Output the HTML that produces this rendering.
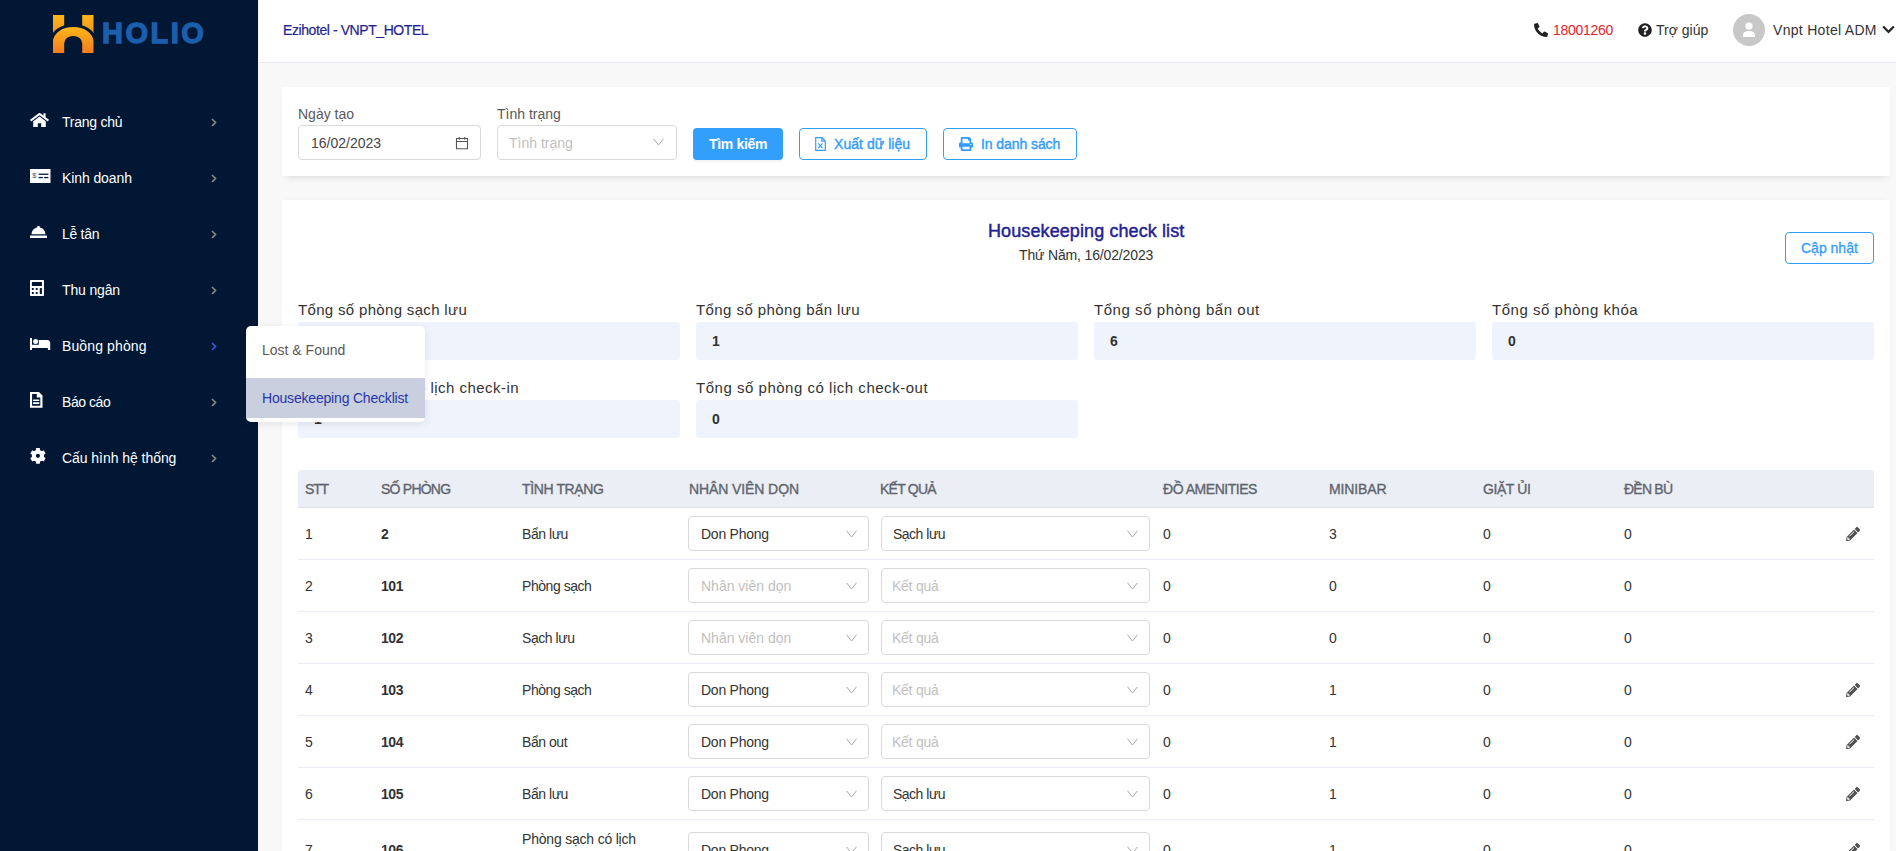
<!DOCTYPE html>
<html><head><meta charset="utf-8">
<style>
*{box-sizing:border-box;margin:0;padding:0}
html,body{width:1896px;height:851px;overflow:hidden;background:#f8f8f8;font-family:"Liberation Sans",sans-serif;color:#333}
.abs{position:absolute}
#side{position:absolute;left:0;top:0;width:258px;height:851px;background:#011734}
.mi{position:absolute;left:0;width:258px;height:40px;color:#fff;font-size:14px}
.mi .t{position:absolute;left:62px;top:12px;line-height:16px;white-space:nowrap}
.mi svg.ic{position:absolute}
.mi .chev{position:absolute;left:211px;top:16px}
#hdr{position:absolute;left:259px;top:0;width:1637px;height:63px;background:#fff;border-bottom:1px solid #e7eaf1}
.txt{position:absolute;white-space:nowrap;line-height:16px}
.card{position:absolute;background:#fff}
.lbl{position:absolute;font-size:14px;color:#595959;white-space:nowrap;line-height:16px}
.inp{position:absolute;border:1px solid #d9d9d9;border-radius:4px;background:#fff}
.btn{position:absolute;border-radius:4px;font-size:14px;white-space:nowrap}
.stl{position:absolute;font-size:15px;color:#333;white-space:nowrap;line-height:18px;letter-spacing:0.4px}
.stb{position:absolute;height:38px;background:#eff3fc;border-radius:3px;font-size:14px;font-weight:bold;color:#333}
.stb span{position:absolute;left:16px;top:11px;line-height:16px}
.th{position:absolute;top:481px;font-size:14px;color:#60646e;-webkit-text-stroke:0.35px #60646e;white-space:nowrap;line-height:16px;letter-spacing:-0.5px}
.row{position:absolute;left:298px;width:1576px;height:52px;border-bottom:1px solid #e9ecf2}
.c{position:absolute;font-size:14px;color:#333;white-space:nowrap;line-height:16px;letter-spacing:-0.45px}
.sel{position:absolute;height:35px;border:1px solid #d9d9d9;border-radius:4px;background:#fff}
.sel span{position:absolute;left:12px;top:9px;font-size:14px;line-height:16px;white-space:nowrap;letter-spacing:-0.25px}
.sel svg{position:absolute;right:11px;top:13px}
</style></head><body>

<!-- SIDEBAR -->
<div id="side">
  <!-- logo -->
  <svg class="abs" style="left:53px;top:15px" width="41" height="38" viewBox="0 0 41 38">
    <defs><linearGradient id="og" x1="0" y1="0" x2="0" y2="1"><stop offset="0" stop-color="#fdb618"/><stop offset="1" stop-color="#f47c20"/></linearGradient></defs>
    <rect x="0" y="0" width="11.2" height="30" fill="url(#og)"/><rect x="29.2" y="0" width="11.3" height="30" fill="url(#og)"/>
    <path fill="none" stroke="#011734" stroke-width="6" d="M0 38V26.5A20.25 14.5 0 0 1 40.5 26.5V38H29.2V28.3A9 7.4 0 0 0 11.2 28.3V38Z"/>
    <path fill="url(#og)" d="M0 38V26.5A20.25 14.5 0 0 1 40.5 26.5V38H29.2V28.3A9 7.4 0 0 0 11.2 28.3V38Z"/>
  </svg>
  <div class="abs" style="left:102px;top:17px;font-size:29px;font-weight:bold;color:#1a5eac;letter-spacing:2.5px;line-height:32px;-webkit-text-stroke:1.3px #1a5eac">HOLIO</div>

  <div class="mi" style="top:102px">
    <svg class="ic" style="left:30px;top:11px" width="19" height="15" viewBox="0 0 19 15"><path d="M0.6 7.6L9.5 0.9L18.4 7.6" stroke="#fff" stroke-width="2" fill="none"/><rect x="13.4" y="0.3" width="2.2" height="4" fill="#fff"/><path fill="#fff" d="M3.2 8.2L9.5 3.4L15.8 8.2V13.9H11.2V10.2H7.8V13.9H3.2Z"/></svg>
    <span class="t" style="letter-spacing:-0.25px">Trang chủ</span>
    <svg class="chev" width="6" height="9" viewBox="0 0 6 9"><path d="M1 1L4.5 4.5L1 8" stroke="#888" stroke-width="1.6" fill="none"/></svg>
  </div>
  <div class="mi" style="top:158px">
    <svg class="ic" style="left:30px;top:11px" width="21" height="14" viewBox="0 0 21 14"><rect width="20.5" height="14" fill="#fff"/><text x="2.3" y="9.4" font-size="7.5" font-family="Liberation Sans" fill="#4a5060">$</text><rect x="8.6" y="4.6" width="9.8" height="1.3" fill="#011734"/><rect x="8.6" y="7.9" width="4.2" height="1.3" fill="#011734"/><rect x="14.2" y="7.9" width="4.2" height="1.3" fill="#011734"/></svg>
    <span class="t" style="letter-spacing:-0.1px">Kinh doanh</span>
    <svg class="chev" width="6" height="9" viewBox="0 0 6 9"><path d="M1 1L4.5 4.5L1 8" stroke="#888" stroke-width="1.6" fill="none"/></svg>
  </div>
  <div class="mi" style="top:214px">
    <svg class="ic" style="left:30px;top:12px" width="17" height="12" viewBox="0 0 17 12"><path fill="#fff" d="M7.3 0H9.7V1.4C13 1.9 15.4 4.7 15.4 8.2H1.6C1.6 4.7 4 1.9 7.3 1.4Z M0 9.5H17V12H0Z"/></svg>
    <span class="t" style="letter-spacing:-0.3px">Lễ tân</span>
    <svg class="chev" width="6" height="9" viewBox="0 0 6 9"><path d="M1 1L4.5 4.5L1 8" stroke="#888" stroke-width="1.6" fill="none"/></svg>
  </div>
  <div class="mi" style="top:270px">
    <svg class="ic" style="left:30px;top:10px" width="14" height="16" viewBox="0 0 14 16"><path fill="#fff" fill-rule="evenodd" d="M1 0H13C13.6 0 14 .4 14 1V15C14 15.6 13.6 16 13 16H1C.4 16 0 15.6 0 15V1C0 .4 .4 0 1 0Z M1.9 2.1V6.1H11.9V2.1Z M1.9 7.9V9.9H3.7V7.9Z M5.8 7.9V9.9H7.6V7.9Z M9.8 7.9V13.9H11.9V7.9Z M1.9 11.9V13.9H3.7V11.9Z M5.8 11.9V13.9H7.6V11.9Z"/></svg>
    <span class="t" style="letter-spacing:-0.15px">Thu ngân</span>
    <svg class="chev" width="6" height="9" viewBox="0 0 6 9"><path d="M1 1L4.5 4.5L1 8" stroke="#888" stroke-width="1.6" fill="none"/></svg>
  </div>
  <div class="mi" style="top:326px">
    <svg class="ic" style="left:30px;top:12px" width="21" height="13" viewBox="0 0 21 13"><path fill="#fff" d="M0 0H2V6.8H8.8V1.9H17.2C18.9 1.9 20.2 3.2 20.2 4.9V12H17.9V9.9H2V12H0Z"/><circle cx="5.6" cy="3.5" r="2.5" fill="#fff"/></svg>
    <span class="t" style="letter-spacing:0.12px">Buồng phòng</span>
    <svg class="chev" width="6" height="9" viewBox="0 0 6 9"><path d="M1 1L4.5 4.5L1 8" stroke="#3b5bdb" stroke-width="1.6" fill="none"/></svg>
  </div>
  <div class="mi" style="top:382px">
    <svg class="ic" style="left:30px;top:10px" width="13" height="16" viewBox="0 0 13 16"><path fill="#fff" fill-rule="evenodd" d="M0 0H9L12.5 3.5V15.8H0Z M2.1 2.1V13.8H10.3V5.4H6.8V2.1Z M3.1 7.4H9.3V8.9H3.1Z M3.1 10.2H9.3V11.9H3.1Z"/></svg>
    <span class="t" style="letter-spacing:-0.45px">Báo cáo</span>
    <svg class="chev" width="6" height="9" viewBox="0 0 6 9"><path d="M1 1L4.5 4.5L1 8" stroke="#888" stroke-width="1.6" fill="none"/></svg>
  </div>
  <div class="mi" style="top:438px">
    <svg class="ic" style="left:30px;top:10px" width="16" height="16" viewBox="0 0 16 16"><g transform="translate(7.95 7.85)" fill="#fff"><circle r="6.1"/><rect x="-2" y="-7.8" width="4" height="15.6" rx="0.6"/><rect x="-2" y="-7.8" width="4" height="15.6" rx="0.6" transform="rotate(60)"/><rect x="-2" y="-7.8" width="4" height="15.6" rx="0.6" transform="rotate(-60)"/><circle r="2.1" fill="#011734"/></g></svg>
    <span class="t" style="letter-spacing:-0.05px">Cấu hình hệ thống</span>
    <svg class="chev" width="6" height="9" viewBox="0 0 6 9"><path d="M1 1L4.5 4.5L1 8" stroke="#888" stroke-width="1.6" fill="none"/></svg>
  </div>
</div>

<!-- HEADER -->
<div id="hdr"></div>
<div class="txt" style="left:283px;top:22px;font-size:14px;color:#1f2390;letter-spacing:-0.42px;-webkit-text-stroke:0.2px #1f2390">Ezihotel - VNPT_HOTEL</div>
<svg class="abs" style="left:1534px;top:23px" width="14" height="14" viewBox="0 0 512 512"><path fill="#222" d="M497.4 361.8l-112-48a24 24 0 0 0-28 6.9l-49.6 60.6A370.7 370.7 0 0 1 130.6 204.1l60.6-49.6a23.9 23.9 0 0 0 6.9-28l-48-112A24.2 24.2 0 0 0 122.6.6l-104 24A24 24 0 0 0 0 48c0 256.5 207.9 464 464 464a24 24 0 0 0 23.4-18.6l24-104a24.3 24.3 0 0 0-14-27.6z"/></svg>
<div class="txt" style="left:1553px;top:22px;font-size:14px;color:#e5242c;letter-spacing:-0.27px">18001260</div>
<svg class="abs" style="left:1638px;top:23px" width="14" height="14" viewBox="0 0 512 512"><path fill="#222" d="M504 256c0 137-111 248-248 248S8 393 8 256 119 8 256 8s248 111 248 248zM262.7 90c-54.5 0-89.3 23-116.5 63.8-3.5 5.3-2.4 12.4 2.7 16.3l34.7 26.3c5.2 3.9 12.6 3 16.7-2.1 17.9-22.7 30.1-35.8 57.3-35.8 20.4 0 45.700 13.100 45.7 33 0 15-12.400 22.7-32.500 34-23.500 13.200-54.600 29.600-54.600 70.600V300c0 6.6 5.400 12 12 12h56c6.6 0 12-5.4 12-12v-1.3c0-28.4 83-29.600 83-106.700 0-58.100-60.300-102-116.700-102zM256 338c-25.300 0-46 20.600-46 46 0 25.300 20.600 46 46 46s46-20.600 46-46c0-25.300-20.600-46-46-46z"/></svg>
<div class="txt" style="left:1656px;top:22px;font-size:14px;color:#333">Trợ giúp</div>
<div class="abs" style="left:1733px;top:14px;width:32px;height:32px;border-radius:50%;background:#c8c8c8;overflow:hidden">
  <svg class="abs" style="left:9px;top:8px" width="14" height="15" viewBox="0 0 14 15"><circle cx="7" cy="4.2" r="3.6" fill="#fff"/><path fill="#fff" d="M1 15V13C1 10.5 3 9 7 9S13 10.5 13 13V15Z"/></svg>
</div>
<div class="txt" style="left:1773px;top:22px;font-size:14px;color:#333;letter-spacing:0.3px">Vnpt Hotel ADM</div>
<svg class="abs" style="left:1882px;top:25px" width="13" height="9" viewBox="0 0 13 9"><path d="M1.2 1.5L6.5 7L11.8 1.5" stroke="#222" stroke-width="2.2" fill="none"/></svg>

<!-- FILTER CARD -->
<div class="card" style="left:282px;top:87px;width:1608px;height:89px;box-shadow:0 5px 7px -4px rgba(0,0,0,0.13)"></div>
<div class="lbl" style="left:298px;top:106px">Ngày tạo</div>
<div class="inp" style="left:298px;top:125px;width:183px;height:35px"></div>
<div class="txt" style="left:311px;top:135px;font-size:14px;color:#454545">16/02/2023</div>
<svg class="abs" style="left:455px;top:136px" width="14" height="14" viewBox="0 0 14 14"><path d="M1.5 2.5H12.5V12.8H1.5Z M1.5 5.5H12.5 M4.2 1V3.8 M9.8 1V3.8" stroke="#555" stroke-width="1.1" fill="none"/></svg>
<div class="lbl" style="left:497px;top:106px">Tình trạng</div>
<div class="inp" style="left:497px;top:125px;width:180px;height:35px"></div>
<div class="txt" style="left:509px;top:135px;font-size:14px;color:#bfbfbf">Tình trạng</div>
<svg class="abs" style="left:653px;top:138px" width="11" height="8" viewBox="0 0 11 8"><path d="M.5 .8L5.5 7L10.5 .8" stroke="#aaa" stroke-width="1" fill="none"/></svg>

<div class="btn" style="left:693px;top:128px;width:90px;height:32px;background:#339ffd;color:#fff;font-weight:bold;box-shadow:0 2px 0 rgba(0,0,0,0.045)"><span class="abs" style="left:16px;top:8px;line-height:16px;letter-spacing:-0.33px">Tìm kiếm</span></div>
<div class="btn" style="left:799px;top:128px;width:128px;height:32px;border:1px solid #339dfc;color:#339dfc;background:#fff">
  <svg class="abs" style="left:15px;top:8px" width="11" height="14" viewBox="0 0 11 14"><path d="M.7 .7H7L10.3 4V13.3H.7Z M6.8 .7V4.2H10.3" stroke="#339dfc" stroke-width="1.2" fill="none"/><path d="M3.2 6.3L7.5 11.2 M7.5 6.3L3.2 11.2" stroke="#339dfc" stroke-width="1.1"/></svg>
  <span class="abs" style="left:34px;top:7px;line-height:16px;-webkit-text-stroke:0.4px #339dfc;letter-spacing:0.05px">Xuất dữ liệu</span>
</div>
<div class="btn" style="left:943px;top:128px;width:134px;height:32px;border:1px solid #339dfc;color:#339dfc;background:#fff">
  <svg class="abs" style="left:15px;top:8px" width="14" height="14" viewBox="0 0 512 512"><path fill="#339dfc" d="M448 192V77.250c0-8.490-3.370-16.620-9.370-22.630L393.370 9.370c-6-6-14.140-9.370-22.630-9.370H96C78.330 0 64 14.330 64 32v160c-35.350 0-64 28.650-64 64v112c0 8.840 7.160 16 16 16h48v96c0 17.670 14.330 32 32 32h320c17.670 0 32-14.330 32-32v-96h48c8.840 0 16-7.160 16-16V256c0-35.350-28.650-64-64-64zm-64 256H128v-96h256v96zm0-224H128V64h192v48c0 8.840 7.160 16 16 16h48v96zm48 72c-13.250 0-24-10.750-24-24 0-13.260 10.750-24 24-24s24 10.740 24 24c0 13.250-10.750 24-24 24z"/></svg>
  <span class="abs" style="left:37px;top:7px;line-height:16px;-webkit-text-stroke:0.4px #339dfc;letter-spacing:-0.08px">In danh sách</span>
</div>

<!-- MAIN CARD -->
<div class="card" style="left:282px;top:200px;width:1608px;height:651px;box-shadow:0 -2px 6px -3px rgba(0,0,0,0.07)"></div>
<div class="txt" style="left:988px;top:221px;font-size:18px;line-height:20px;color:#1f2394;letter-spacing:0.1px;-webkit-text-stroke:0.45px #1f2394">Housekeeping check list</div>
<div class="txt" style="left:1019px;top:247px;font-size:14px;color:#333;letter-spacing:-0.15px">Thứ Năm, 16/02/2023</div>
<div class="btn" style="left:1785px;top:232px;width:89px;height:32px;border:1px solid #339dfc;color:#339dfc;background:#fff"><span class="abs" style="left:15px;top:7px;line-height:16px;-webkit-text-stroke:0.3px #339dfc">Cập nhật</span></div>

<div class="stl" style="left:298px;top:301px;letter-spacing:0.33px">Tổng số phòng sạch lưu</div>
<div class="stb" style="left:298px;top:322px;width:382px"><span>1</span></div>
<div class="stl" style="left:696px;top:301px;letter-spacing:0.42px">Tổng số phòng bẩn lưu</div>
<div class="stb" style="left:696px;top:322px;width:382px"><span>1</span></div>
<div class="stl" style="left:1094px;top:301px;letter-spacing:0.55px">Tổng số phòng bẩn out</div>
<div class="stb" style="left:1094px;top:322px;width:382px"><span>6</span></div>
<div class="stl" style="left:1492px;top:301px;letter-spacing:0.52px">Tổng số phòng khóa</div>
<div class="stb" style="left:1492px;top:322px;width:382px"><span>0</span></div>
<div class="stl" style="left:298px;top:379px;letter-spacing:0.48px">Tổng số phòng có lịch check-in</div>
<div class="stb" style="left:298px;top:400px;width:382px"><span>1</span></div>
<div class="stl" style="left:696px;top:379px;letter-spacing:0.52px">Tổng số phòng có lịch check-out</div>
<div class="stb" style="left:696px;top:400px;width:382px"><span>0</span></div>

<!-- TABLE -->
<div class="abs" style="left:298px;top:470px;width:1576px;height:38px;background:#ebeef5;border-radius:4px 4px 0 0;border-bottom:1px solid #e2e4e9"></div>
<div class="th" style="left:305px;letter-spacing:-1.2px">STT</div>
<div class="th" style="left:381px;letter-spacing:-0.77px">SỐ PHÒNG</div>
<div class="th" style="left:522px;letter-spacing:-0.38px">TÌNH TRẠNG</div>
<div class="th" style="left:689px;letter-spacing:-0.1px">NHÂN VIÊN DỌN</div>
<div class="th" style="left:880px;letter-spacing:-0.77px">KẾT QUẢ</div>
<div class="th" style="left:1163px;letter-spacing:-0.47px">ĐỒ AMENITIES</div>
<div class="th" style="left:1329px;letter-spacing:-0.12px">MINIBAR</div>
<div class="th" style="left:1483px;letter-spacing:-0.42px">GIẶT ỦI</div>
<div class="th" style="left:1624px;letter-spacing:-0.78px">ĐỀN BÙ</div>

<div id="rows">
<div class="row" style="top:508px;height:52px"></div>
<div class="c" style="left:305px;top:526px">1</div>
<div class="c" style="left:381px;top:526px;font-weight:bold">2</div>
<div class="c" style="left:522px;top:526px">Bẩn lưu</div>
<div class="sel" style="left:688px;top:516px;width:181px"><span style="color:#333">Don Phong</span><svg width="11" height="8" viewBox="0 0 11 8"><path d="M.5 .8L5.5 7L10.5 .8" stroke="#aaa" stroke-width="1" fill="none"/></svg></div>
<div class="sel" style="left:881px;top:516px;width:269px"><span style="color:#333;left:11px;letter-spacing:-0.5px">Sạch lưu</span><svg width="11" height="8" viewBox="0 0 11 8"><path d="M.5 .8L5.5 7L10.5 .8" stroke="#aaa" stroke-width="1" fill="none"/></svg></div>
<div class="c" style="left:1163px;top:526px">0</div>
<div class="c" style="left:1329px;top:526px">3</div>
<div class="c" style="left:1483px;top:526px">0</div>
<div class="c" style="left:1624px;top:526px">0</div>
<svg class="abs" style="left:1846px;top:527px" width="14" height="14" viewBox="0 0 512 512"><path fill="#505050" d="M497.9 142.1l-46.1 46.1c-4.7 4.7-12.3 4.7-17 0l-111-111c-4.7-4.7-4.7-12.3 0-17l46.1-46.1c18.7-18.7 49.1-18.7 67.9 0l60.1 60.1c18.8 18.7 18.8 49.1 0 67.9zM284.2 99.8L21.6 362.4.4 483.9c-2.9 16.4 11.4 30.6 27.8 27.8l121.5-21.3 262.6-262.6c4.7-4.7 4.7-12.3 0-17l-111-111c-4.8-4.7-12.4-4.7-17.1 0zM124.1 339.9c-5.5-5.5-5.5-14.3 0-19.8l154-154c5.5-5.5 14.3-5.5 19.8 0s5.5 14.3 0 19.8l-154 154c-5.5 5.5-14.3 5.5-19.8 0zM88 424h48v36.3l-64.5 11.3-31.1-31.1L51.7 376H88v48z"/></svg>
<div class="row" style="top:560px;height:52px"></div>
<div class="c" style="left:305px;top:578px">2</div>
<div class="c" style="left:381px;top:578px;font-weight:bold">101</div>
<div class="c" style="left:522px;top:578px">Phòng sạch</div>
<div class="sel" style="left:688px;top:568px;width:181px"><span style="color:#bfbfbf;letter-spacing:0px">Nhân viên dọn</span><svg width="11" height="8" viewBox="0 0 11 8"><path d="M.5 .8L5.5 7L10.5 .8" stroke="#aaa" stroke-width="1" fill="none"/></svg></div>
<div class="sel" style="left:881px;top:568px;width:269px"><span style="color:#bfbfbf;left:10px">Kết quả</span><svg width="11" height="8" viewBox="0 0 11 8"><path d="M.5 .8L5.5 7L10.5 .8" stroke="#aaa" stroke-width="1" fill="none"/></svg></div>
<div class="c" style="left:1163px;top:578px">0</div>
<div class="c" style="left:1329px;top:578px">0</div>
<div class="c" style="left:1483px;top:578px">0</div>
<div class="c" style="left:1624px;top:578px">0</div>
<div class="row" style="top:612px;height:52px"></div>
<div class="c" style="left:305px;top:630px">3</div>
<div class="c" style="left:381px;top:630px;font-weight:bold">102</div>
<div class="c" style="left:522px;top:630px">Sạch lưu</div>
<div class="sel" style="left:688px;top:620px;width:181px"><span style="color:#bfbfbf;letter-spacing:0px">Nhân viên dọn</span><svg width="11" height="8" viewBox="0 0 11 8"><path d="M.5 .8L5.5 7L10.5 .8" stroke="#aaa" stroke-width="1" fill="none"/></svg></div>
<div class="sel" style="left:881px;top:620px;width:269px"><span style="color:#bfbfbf;left:10px">Kết quả</span><svg width="11" height="8" viewBox="0 0 11 8"><path d="M.5 .8L5.5 7L10.5 .8" stroke="#aaa" stroke-width="1" fill="none"/></svg></div>
<div class="c" style="left:1163px;top:630px">0</div>
<div class="c" style="left:1329px;top:630px">0</div>
<div class="c" style="left:1483px;top:630px">0</div>
<div class="c" style="left:1624px;top:630px">0</div>
<div class="row" style="top:664px;height:52px"></div>
<div class="c" style="left:305px;top:682px">4</div>
<div class="c" style="left:381px;top:682px;font-weight:bold">103</div>
<div class="c" style="left:522px;top:682px">Phòng sạch</div>
<div class="sel" style="left:688px;top:672px;width:181px"><span style="color:#333">Don Phong</span><svg width="11" height="8" viewBox="0 0 11 8"><path d="M.5 .8L5.5 7L10.5 .8" stroke="#aaa" stroke-width="1" fill="none"/></svg></div>
<div class="sel" style="left:881px;top:672px;width:269px"><span style="color:#bfbfbf;left:10px">Kết quả</span><svg width="11" height="8" viewBox="0 0 11 8"><path d="M.5 .8L5.5 7L10.5 .8" stroke="#aaa" stroke-width="1" fill="none"/></svg></div>
<div class="c" style="left:1163px;top:682px">0</div>
<div class="c" style="left:1329px;top:682px">1</div>
<div class="c" style="left:1483px;top:682px">0</div>
<div class="c" style="left:1624px;top:682px">0</div>
<svg class="abs" style="left:1846px;top:683px" width="14" height="14" viewBox="0 0 512 512"><path fill="#505050" d="M497.9 142.1l-46.1 46.1c-4.7 4.7-12.3 4.7-17 0l-111-111c-4.7-4.7-4.7-12.3 0-17l46.1-46.1c18.7-18.7 49.1-18.7 67.9 0l60.1 60.1c18.8 18.7 18.8 49.1 0 67.9zM284.2 99.8L21.6 362.4.4 483.9c-2.9 16.4 11.4 30.6 27.8 27.8l121.5-21.3 262.6-262.6c4.7-4.7 4.7-12.3 0-17l-111-111c-4.8-4.7-12.4-4.7-17.1 0zM124.1 339.9c-5.5-5.5-5.5-14.3 0-19.8l154-154c5.5-5.5 14.3-5.5 19.8 0s5.5 14.3 0 19.8l-154 154c-5.5 5.5-14.3 5.5-19.8 0zM88 424h48v36.3l-64.5 11.3-31.1-31.1L51.7 376H88v48z"/></svg>
<div class="row" style="top:716px;height:52px"></div>
<div class="c" style="left:305px;top:734px">5</div>
<div class="c" style="left:381px;top:734px;font-weight:bold">104</div>
<div class="c" style="left:522px;top:734px">Bẩn out</div>
<div class="sel" style="left:688px;top:724px;width:181px"><span style="color:#333">Don Phong</span><svg width="11" height="8" viewBox="0 0 11 8"><path d="M.5 .8L5.5 7L10.5 .8" stroke="#aaa" stroke-width="1" fill="none"/></svg></div>
<div class="sel" style="left:881px;top:724px;width:269px"><span style="color:#bfbfbf;left:10px">Kết quả</span><svg width="11" height="8" viewBox="0 0 11 8"><path d="M.5 .8L5.5 7L10.5 .8" stroke="#aaa" stroke-width="1" fill="none"/></svg></div>
<div class="c" style="left:1163px;top:734px">0</div>
<div class="c" style="left:1329px;top:734px">1</div>
<div class="c" style="left:1483px;top:734px">0</div>
<div class="c" style="left:1624px;top:734px">0</div>
<svg class="abs" style="left:1846px;top:735px" width="14" height="14" viewBox="0 0 512 512"><path fill="#505050" d="M497.9 142.1l-46.1 46.1c-4.7 4.7-12.3 4.7-17 0l-111-111c-4.7-4.7-4.7-12.3 0-17l46.1-46.1c18.7-18.7 49.1-18.7 67.9 0l60.1 60.1c18.8 18.7 18.8 49.1 0 67.9zM284.2 99.8L21.6 362.4.4 483.9c-2.9 16.4 11.4 30.6 27.8 27.8l121.5-21.3 262.6-262.6c4.7-4.7 4.7-12.3 0-17l-111-111c-4.8-4.7-12.4-4.7-17.1 0zM124.1 339.9c-5.5-5.5-5.5-14.3 0-19.8l154-154c5.5-5.5 14.3-5.5 19.8 0s5.5 14.3 0 19.8l-154 154c-5.5 5.5-14.3 5.5-19.8 0zM88 424h48v36.3l-64.5 11.3-31.1-31.1L51.7 376H88v48z"/></svg>
<div class="row" style="top:768px;height:52px"></div>
<div class="c" style="left:305px;top:786px">6</div>
<div class="c" style="left:381px;top:786px;font-weight:bold">105</div>
<div class="c" style="left:522px;top:786px">Bẩn lưu</div>
<div class="sel" style="left:688px;top:776px;width:181px"><span style="color:#333">Don Phong</span><svg width="11" height="8" viewBox="0 0 11 8"><path d="M.5 .8L5.5 7L10.5 .8" stroke="#aaa" stroke-width="1" fill="none"/></svg></div>
<div class="sel" style="left:881px;top:776px;width:269px"><span style="color:#333;left:11px;letter-spacing:-0.5px">Sạch lưu</span><svg width="11" height="8" viewBox="0 0 11 8"><path d="M.5 .8L5.5 7L10.5 .8" stroke="#aaa" stroke-width="1" fill="none"/></svg></div>
<div class="c" style="left:1163px;top:786px">0</div>
<div class="c" style="left:1329px;top:786px">1</div>
<div class="c" style="left:1483px;top:786px">0</div>
<div class="c" style="left:1624px;top:786px">0</div>
<svg class="abs" style="left:1846px;top:787px" width="14" height="14" viewBox="0 0 512 512"><path fill="#505050" d="M497.9 142.1l-46.1 46.1c-4.7 4.7-12.3 4.7-17 0l-111-111c-4.7-4.7-4.7-12.3 0-17l46.1-46.1c18.7-18.7 49.1-18.7 67.9 0l60.1 60.1c18.8 18.7 18.8 49.1 0 67.9zM284.2 99.8L21.6 362.4.4 483.9c-2.9 16.4 11.4 30.6 27.8 27.8l121.5-21.3 262.6-262.6c4.7-4.7 4.7-12.3 0-17l-111-111c-4.8-4.7-12.4-4.7-17.1 0zM124.1 339.9c-5.5-5.5-5.5-14.3 0-19.8l154-154c5.5-5.5 14.3-5.5 19.8 0s5.5 14.3 0 19.8l-154 154c-5.5 5.5-14.3 5.5-19.8 0zM88 424h48v36.3l-64.5 11.3-31.1-31.1L51.7 376H88v48z"/></svg>
<div class="row" style="top:820px;height:60px"></div>
<div class="c" style="left:305px;top:842px">7</div>
<div class="c" style="left:381px;top:842px;font-weight:bold">106</div>
<div class="c" style="left:522px;top:829px;line-height:21px;letter-spacing:-0.2px">Phòng sạch có lịch<br>check-in</div>
<div class="sel" style="left:688px;top:832px;width:181px"><span style="color:#333">Don Phong</span><svg width="11" height="8" viewBox="0 0 11 8"><path d="M.5 .8L5.5 7L10.5 .8" stroke="#aaa" stroke-width="1" fill="none"/></svg></div>
<div class="sel" style="left:881px;top:832px;width:269px"><span style="color:#333;left:11px;letter-spacing:-0.5px">Sạch lưu</span><svg width="11" height="8" viewBox="0 0 11 8"><path d="M.5 .8L5.5 7L10.5 .8" stroke="#aaa" stroke-width="1" fill="none"/></svg></div>
<div class="c" style="left:1163px;top:842px">0</div>
<div class="c" style="left:1329px;top:842px">1</div>
<div class="c" style="left:1483px;top:842px">0</div>
<div class="c" style="left:1624px;top:842px">0</div>
<svg class="abs" style="left:1846px;top:843px" width="14" height="14" viewBox="0 0 512 512"><path fill="#505050" d="M497.9 142.1l-46.1 46.1c-4.7 4.7-12.3 4.7-17 0l-111-111c-4.7-4.7-4.7-12.3 0-17l46.1-46.1c18.7-18.7 49.1-18.7 67.9 0l60.1 60.1c18.8 18.7 18.8 49.1 0 67.9zM284.2 99.8L21.6 362.4.4 483.9c-2.9 16.4 11.4 30.6 27.8 27.8l121.5-21.3 262.6-262.6c4.7-4.7 4.7-12.3 0-17l-111-111c-4.8-4.7-12.4-4.7-17.1 0zM124.1 339.9c-5.5-5.5-5.5-14.3 0-19.8l154-154c5.5-5.5 14.3-5.5 19.8 0s5.5 14.3 0 19.8l-154 154c-5.5 5.5-14.3 5.5-19.8 0zM88 424h48v36.3l-64.5 11.3-31.1-31.1L51.7 376H88v48z"/></svg>
</div><!--/rows-->

<!-- DROPDOWN POPUP -->
<div class="abs" style="left:246px;top:326px;width:179px;height:96px;background:#fff;border-radius:5px;box-shadow:0 2px 8px rgba(0,0,0,.09)"></div>
<div class="txt" style="left:262px;top:342px;font-size:14px;color:#595959">Lost &amp; Found</div>
<div class="abs" style="left:246px;top:378px;width:179px;height:40px;background:#c9cfdf"></div>
<div class="txt" style="left:262px;top:390px;font-size:14px;color:#2636a8;letter-spacing:-0.19px">Housekeeping Checklist</div>

</body></html>
